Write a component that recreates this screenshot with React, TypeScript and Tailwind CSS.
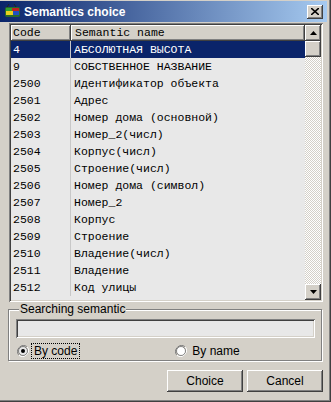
import React from 'react';

const rows: [string, string][] = [
  ['4', 'АБСОЛЮТНАЯ ВЫСОТА'],
  ['9', 'СОБСТВЕННОЕ НАЗВАНИЕ'],
  ['2500', 'Идентификатор объекта'],
  ['2501', 'Адрес'],
  ['2502', 'Номер дома (основной)'],
  ['2503', 'Номер_2(числ)'],
  ['2504', 'Корпус(числ)'],
  ['2505', 'Строение(числ)'],
  ['2506', 'Номер дома (символ)'],
  ['2507', 'Номер_2'],
  ['2508', 'Корпус'],
  ['2509', 'Строение'],
  ['2510', 'Владение(числ)'],
  ['2511', 'Владение'],
  ['2512', 'Код улицы'],
];

const raised =
  'bg-[#d4d0c8] shadow-[inset_-1px_-1px_#404040,inset_1px_1px_#ffffff,inset_-2px_-2px_#808080,inset_2px_2px_#d4d0c8]';
const sunken =
  'shadow-[inset_1px_1px_#808080,inset_-1px_-1px_#ffffff,inset_2px_2px_#404040,inset_-2px_-2px_#d4d0c8]';

const Arrow = ({ up }: { up?: boolean }) => (
  <svg width="7" height="4" viewBox="0 0 7 4">
    <path d={up ? 'M3.5 0 L7 4 L0 4 Z' : 'M0 0 L7 0 L3.5 4 Z'} fill="#000" />
  </svg>
);

const Radio = ({ checked }: { checked?: boolean }) => (
  <svg width="12" height="12" viewBox="0 0 12 12">
    <path d="M10.2 1.8 A6 6 0 0 0 1.8 10.2" stroke="#808080" strokeWidth="1" fill="none" />
    <path d="M1.8 10.2 A6 6 0 0 0 10.2 1.8" stroke="#ffffff" strokeWidth="1" fill="none" />
    <circle cx="6" cy="6" r="4.5" fill={checked ? '#e8e8e8' : '#ffffff'} stroke="#404040" strokeWidth="0.6" />
    {checked && <circle cx="6" cy="6" r="2" fill="#000" />}
  </svg>
);

const AppIcon = () => (
  <svg width="17" height="15" viewBox="0 0 17 15">
    <rect x="1" y="3" width="15" height="10" rx="2" fill="#2a6a2a" />
    <rect x="2" y="7" width="7" height="4" fill="#e8d020" />
    <rect x="9" y="7" width="6" height="4" fill="#2050c0" />
    <rect x="2" y="4" width="6" height="3" fill="#30a030" />
    <rect x="8" y="4" width="7" height="3" fill="#c02020" />
    <path d="M3 3 L5 0 M12 3 L10 0" stroke="#222" strokeWidth="1" />
  </svg>
);

export default function App() {
  return (
    <div
      className="w-[331px] h-[402px] bg-[#d4d0c8] flex flex-col shadow-[inset_-1px_-1px_#404040,inset_-2px_-2px_#808080] overflow-hidden"
      style={{ fontFamily: '"Liberation Sans", Arial, sans-serif' }}
    >
      {/* title bar */}
      <div className="h-[21px] mr-[4px] mt-[1px] flex items-center bg-[linear-gradient(90deg,#0a246a,#a6caf0)]">
        <div className="ml-[4px] w-[17px] flex items-center">
          <AppIcon />
        </div>
        <span className="ml-[3px] text-white font-bold text-[12px] leading-none">Semantics choice</span>
        <div className={`ml-auto mr-[4px] w-[16px] h-[14px] flex items-center justify-center ${raised}`}>
          <svg width="8" height="7" viewBox="0 0 8 7">
            <path d="M0 0 L8 7 M8 0 L0 7" stroke="#000" strokeWidth="1.6" />
          </svg>
        </div>
      </div>

      {/* grid */}
      <div className={`mt-[1px] ml-[9px] w-[314px] h-[279px] p-[2px] flex ${sunken}`}>
        <div
          className="flex-1 bg-[#e8e8e8] overflow-hidden text-[11.5px] text-black"
          style={{ fontFamily: '"Liberation Mono", "Courier New", monospace' }}
        >
          <div className="flex h-[16px]">
            <div className={`w-[60px] pl-[2px] flex items-center ${raised}`}>Code</div>
            <div className={`flex-1 pl-[4px] flex items-center ${raised}`}>Semantic name</div>
          </div>
          {rows.map(([code, name], i) => (
            <div
              key={code}
              className={`flex h-[17px] items-center ${i === 0 ? 'bg-[#0a246a] text-white' : ''}`}
            >
              <div className="w-[59px] pl-[2px]">{code}</div>
              <div className="w-[1px] h-full bg-[#c8c8c8]" />
              <div className="flex-1 pl-[3px] whitespace-nowrap">{name}</div>
            </div>
          ))}
        </div>
        <div className="w-[16px] flex flex-col bg-[repeating-conic-gradient(#ffffff_0_25%,#d4d0c8_0_50%)] bg-[length:2px_2px]">
          <div className={`h-[16px] flex items-center justify-center ${raised}`}>
            <Arrow up />
          </div>
          <div className={`h-[16px] ${raised}`} />
          <div className="flex-1" />
          <div className={`h-[16px] flex items-center justify-center ${raised}`}>
            <Arrow />
          </div>
        </div>
      </div>

      {/* search group */}
      <div className="relative mt-[7px] ml-[8px] w-[314px] h-[52px] border border-[#808080] shadow-[inset_1px_1px_#ffffff,1px_1px_#ffffff]">
        <span className="absolute left-[10px] top-[-8px] px-[1px] bg-[#d4d0c8] text-[12px] leading-[14px] text-black">
          Searching semantic
        </span>
        <div className={`mt-[9px] ml-[7px] w-[299px] h-[19px] bg-[#e8e8e8] ${sunken}`} />
        <div className="flex items-center mt-[5px] h-[16px] text-[12px] text-black">
          <div className="ml-[8px] flex items-center">
            <Radio checked />
          </div>
          <span className="ml-[3px] px-[2px] leading-[14px] outline outline-1 outline-dotted outline-black">By code</span>
          <div className="ml-[96px] flex items-center">
            <Radio />
          </div>
          <span className="ml-[5px] leading-[14px]">By name</span>
        </div>
      </div>

      {/* buttons */}
      <div className="mt-[9px] mr-[8px] flex justify-end gap-[4px]">
        <button className={`w-[76px] h-[22px] text-[12px] text-black ${raised}`}>Choice</button>
        <button className={`w-[76px] h-[22px] text-[12px] text-black ${raised}`}>Cancel</button>
      </div>
    </div>
  );
}
